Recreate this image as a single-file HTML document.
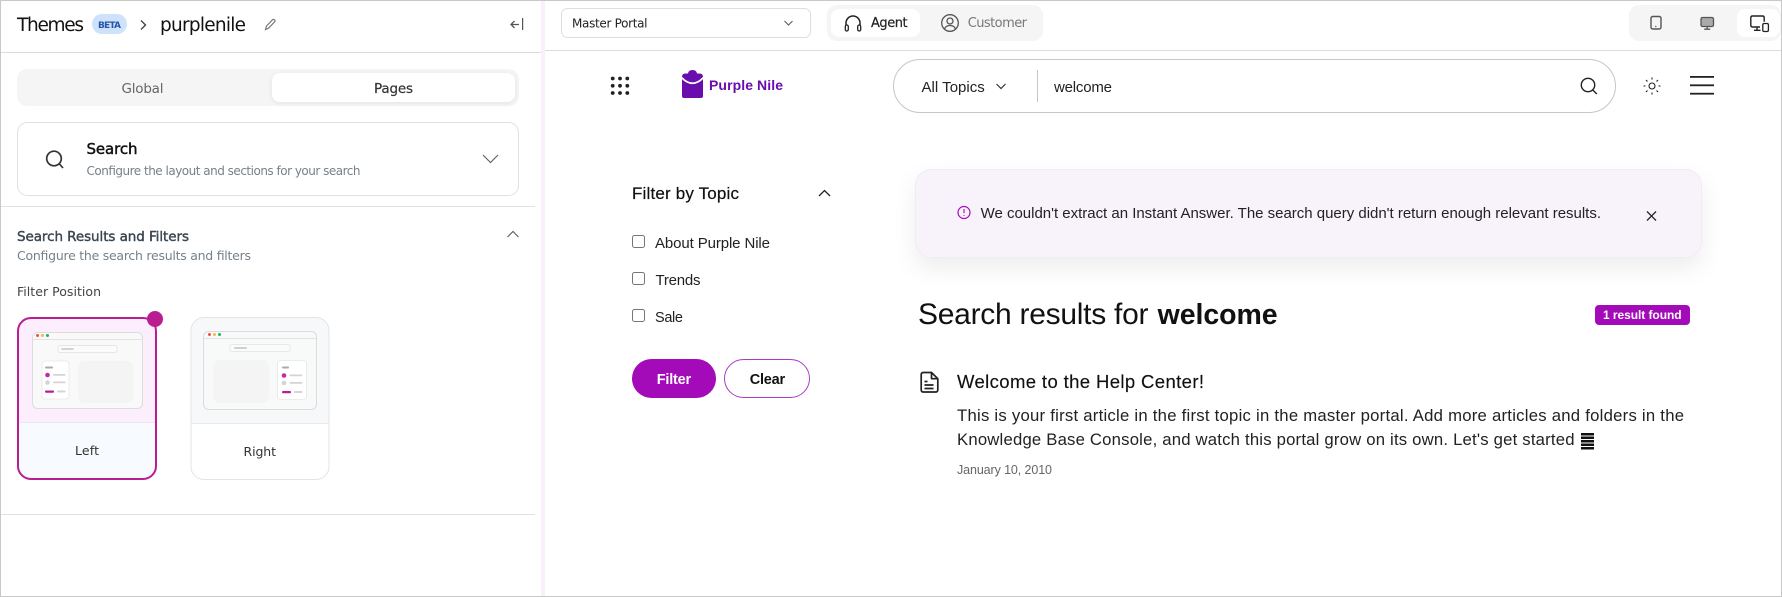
<!DOCTYPE html>
<html lang="en"><head><meta charset="utf-8"><title>Themes</title>
<style>
html,body{margin:0;padding:0;background:#fff;width:1782px;height:597px;overflow:hidden}
svg{display:block}
text{white-space:pre;font-family:"Liberation Sans",sans-serif}
.o text,text.o{font-family:"DejaVu Sans","Liberation Sans",sans-serif}
</style></head><body>
<svg width="1782" height="597" viewBox="0 0 1782 597" xmlns="http://www.w3.org/2000/svg">
<defs>
<filter id="bs" x="-10%" y="-50%" width="120%" height="220%"><feDropShadow dx="0" dy="10" stdDeviation="11" flood-color="#000" flood-opacity=".07"/></filter>
<filter id="ts" x="-5%" y="-30%" width="110%" height="170%"><feDropShadow dx="0" dy="1" stdDeviation="2" flood-color="#000" flood-opacity=".08"/></filter>
</defs>
<rect width="1782" height="597" fill="#fff"/>
<!-- pink separator -->
<rect x="541" y="1" width="4" height="595" fill="#fbeefd"/>
<!-- header lines -->
<rect x="1" y="52" width="540" height="1" fill="#dcdcdc"/>
<rect x="545" y="50" width="1236" height="1" fill="#dcdcdc"/>
<rect x="1" y="206" width="534" height="1" fill="#e2e2e2"/>
<rect x="1" y="514" width="534" height="1" fill="#e2e2e2"/>

<!-- left header -->
<g class="o">
<text x="17" y="31" font-size="18.500" fill="#111" textLength="67">Themes</text>
<rect x="92" y="14" width="35" height="20" rx="10" fill="#cfe2fb"/>
<text x="98" y="28" font-size="9" font-weight="700" fill="#2456a6" textLength="23">BETA</text>
<path d="M141 20.500l4.500 4.500-4.500 4.500" fill="none" stroke="#444" stroke-width="1.400"/>
<text x="160" y="31" font-size="18.500" fill="#111" textLength="86">purplenile</text>
<path d="M265.500 29.500l1-3.500 6-6.200q1-.8 2 .1t.1 2l-6 6.200z" fill="none" stroke="#777" stroke-width="1.200"/>
<path d="M519 24.500h-8m3.500-3.500l-3.500 3.500 3.500 3.500" fill="none" stroke="#555" stroke-width="1.300"/>
<rect x="522" y="18" width="1.200" height="12" fill="#555"/>

<!-- tabs -->
<rect x="17" y="69" width="502" height="37" rx="10" fill="#f5f5f5"/>
<rect x="272" y="73" width="243" height="29" rx="8" fill="#fff" filter="url(#ts)"/>
<text x="121.500" y="93" font-size="13.500" fill="#666" textLength="42">Global</text>
<text x="374" y="93" font-size="13.500" fill="#333" stroke="#333" stroke-width=".2" textLength="39">Pages</text>

<!-- search card -->
<rect x="17.500" y="122.500" width="501" height="73" rx="10" fill="#fff" stroke="#e0e0e0"/>
<circle cx="54" cy="158.500" r="7.300" fill="none" stroke="#333" stroke-width="1.700"/>
<path d="M59.500 164l3.500 4" stroke="#333" stroke-width="1.700" fill="none"/>
<text x="86.500" y="154" font-size="15" fill="#111" stroke="#111" stroke-width=".45" textLength="51">Search</text>
<text x="86.500" y="175" font-size="12" fill="#76818a" textLength="274">Configure the layout and sections for your search</text>
<path d="M483 155l7.500 7.500 7.500-7.500" fill="none" stroke="#666" stroke-width="1.200"/>

<!-- section -->
<text x="17" y="241" font-size="13.500" fill="#3a4550" stroke="#3a4550" stroke-width=".4" textLength="172">Search Results and Filters</text>
<text x="17" y="260" font-size="12.500" fill="#76818a" textLength="234">Configure the search results and filters</text>
<path d="M507.500 237l5.500-5.500 5.500 5.500" fill="none" stroke="#666" stroke-width="1.200"/>
<text x="17" y="296" font-size="12.500" fill="#444" textLength="84">Filter Position</text>
</g>

<!-- Left card -->
<rect x="18" y="318" width="138" height="161" rx="13" fill="#f7fbff"/>
<path d="M18 422V331a13 13 0 0 1 13-13h112a13 13 0 0 1 13 13v91z" fill="#fdeefe"/>
<rect x="18" y="422" width="138" height="1" fill="#ece8ee"/>
<rect x="18" y="318" width="138" height="161" rx="13" fill="none" stroke="#b81e90" stroke-width="2"/>
<circle cx="155" cy="319" r="8" fill="#b81e90"/>
<rect x="32.500" y="332.500" width="110" height="76" rx="5" fill="#f9f9f9" stroke="#ddd"/>
<rect x="33" y="339" width="109" height="1" fill="#e4e4e4"/>
<circle cx="37.500" cy="335.500" r="1.500" fill="#ee5050"/><circle cx="42.500" cy="335.500" r="1.500" fill="#f5bd3a"/><circle cx="47.500" cy="335.500" r="1.500" fill="#22b070"/>
<rect x="58" y="345.500" width="59" height="7" rx="2" fill="#fbfbfb" stroke="#e6e6e6"/>
<rect x="61" y="348" width="13" height="2" rx="1" fill="#d4d4d4"/>
<rect x="42" y="361" width="27" height="38" rx="3" fill="#fff" stroke="#e6e6e6" stroke-width=".8"/>
<rect x="78" y="361" width="55" height="42" rx="6" fill="#f3f4f3"/>
<rect x="45" y="366.500" width="8" height="2" rx="1" fill="#aaa"/>
<circle cx="47.500" cy="375" r="2.300" fill="#c42aa6"/><rect x="53" y="374" width="12.500" height="1.800" rx=".9" fill="#d4d4d4"/>
<circle cx="47.500" cy="382.500" r="2.300" fill="#d4d4d4"/><rect x="53" y="381.500" width="12.500" height="1.800" rx=".9" fill="#d4d4d4"/>
<rect x="45" y="390.500" width="9" height="2.200" rx="1" fill="#b81e90"/><rect x="57" y="390.500" width="8.500" height="2" rx="1" fill="#d4d4d4"/>

<!-- Right card -->
<rect x="191" y="317.500" width="138" height="162" rx="13" fill="#fff"/>
<path d="M191 423V330.500a13 13 0 0 1 13-13h112a13 13 0 0 1 13 13V423z" fill="#f7f8f9"/>
<rect x="191" y="423" width="138" height="1" fill="#e8e8e8"/>
<rect x="191" y="317.500" width="138" height="162" rx="13" fill="none" stroke="#e4e4e4"/>
<rect x="203.500" y="331.500" width="113" height="78" rx="5" fill="#f8f9f9" stroke="#dcdcdc"/>
<rect x="204" y="338" width="112" height="1" fill="#e2e2e2"/>
<circle cx="209.500" cy="334.500" r="1.500" fill="#ee5050"/><circle cx="214.500" cy="334.500" r="1.500" fill="#f5bd3a"/><circle cx="219.500" cy="334.500" r="1.500" fill="#22b070"/>
<rect x="230" y="344.500" width="60" height="7" rx="2" fill="#fbfbfb" stroke="#e8e8e8"/>
<rect x="234" y="347" width="13" height="2" rx="1" fill="#d0d0d0"/>
<rect x="213" y="360" width="56" height="43" rx="7" fill="#f3f4f3"/>
<rect x="277.500" y="360.500" width="29" height="39" rx="3" fill="#fff" stroke="#e6e6e6" stroke-width=".8"/>
<rect x="282" y="366.500" width="7" height="2" rx="1" fill="#aaa"/>
<circle cx="284" cy="375.500" r="2.300" fill="#c42aa6"/><rect x="289.500" y="374.500" width="13" height="1.800" rx=".9" fill="#d4d4d4"/>
<circle cx="284" cy="383" r="2.300" fill="#d4d4d4"/><rect x="289.500" y="382" width="13" height="1.800" rx=".9" fill="#d4d4d4"/>
<rect x="282" y="391" width="9" height="2.200" rx="1" fill="#b81e90"/><rect x="294" y="391" width="8.500" height="2" rx="1" fill="#d4d4d4"/>

<g class="o">
<text x="75" y="455" font-size="12.500" fill="#333" textLength="24">Left</text>
<text x="243.500" y="456" font-size="12.500" fill="#333" textLength="32.500">Right</text>
</g>

<!-- top bar -->
<g class="o">
<rect x="561.500" y="8.500" width="249" height="29" rx="6" fill="#fff" stroke="#dedede"/>
<text x="572" y="27.500" font-size="12" fill="#222" textLength="75.500">Master Portal</text>
<path d="M784.500 21l4 4 4-4" fill="none" stroke="#666" stroke-width="1.200"/>
<rect x="827" y="5" width="216" height="36" rx="10" fill="#f5f5f5"/>
<rect x="831" y="9" width="89" height="28" rx="8" fill="#fff"/>
<path d="M846 29v-6a7 7 0 0 1 14 0v6" fill="none" stroke="#222" stroke-width="1.500"/>
<rect x="845.300" y="25" width="3" height="6" rx="1.500" fill="#fff" stroke="#222" stroke-width="1.300"/>
<rect x="857.700" y="25" width="3" height="6" rx="1.500" fill="#fff" stroke="#222" stroke-width="1.300"/>
<text x="871" y="27" font-size="13" fill="#222" stroke="#222" stroke-width=".2" textLength="36.600">Agent</text>
<circle cx="950" cy="23" r="8.300" fill="none" stroke="#555" stroke-width="1.300"/>
<circle cx="950" cy="21" r="3" fill="none" stroke="#555" stroke-width="1.300"/>
<path d="M944.500 29c1-3 3-3.500 5.500-3.500s4.500.5 5.500 3.500" fill="none" stroke="#555" stroke-width="1.300"/>
<text x="967.700" y="27" font-size="13" fill="#777" textLength="59.300">Customer</text>
<rect x="1629" y="5" width="152" height="36" rx="10" fill="#f5f5f5"/>
<rect x="1737" y="9" width="43" height="28" rx="8" fill="#fff"/>
</g>
<rect x="1651" y="16.500" width="10" height="12.500" rx="1.800" fill="none" stroke="#555" stroke-width="1.400"/>
<circle cx="1655.800" cy="26.500" r=".7" fill="#555"/>
<rect x="1701" y="17.500" width="12.500" height="9" rx="1.500" fill="#aaa" stroke="#555" stroke-width="1.300"/>
<path d="M1707.200 27v2m-3 .2h6" stroke="#555" stroke-width="1.300" fill="none"/>
<path d="M1760 27h-7.500q-1.700 0-1.700-1.700v-7.600q0-1.700 1.700-1.700h10q1.700 0 1.700 1.700v4" fill="none" stroke="#222" stroke-width="1.400"/>
<path d="M1757 27v3m-3 .3h6.500" stroke="#222" stroke-width="1.400" fill="none"/>
<rect x="1762.800" y="23.500" width="5.600" height="8" rx="1.400" fill="none" stroke="#222" stroke-width="1.300"/>

<!-- portal header -->
<g fill="#222">
<circle cx="612.700" cy="78.500" r="1.900"/><circle cx="620" cy="78.500" r="1.900"/><circle cx="627.300" cy="78.500" r="1.900"/>
<circle cx="612.700" cy="85.800" r="1.900"/><circle cx="620" cy="85.800" r="1.900"/><circle cx="627.300" cy="85.800" r="1.900"/>
<circle cx="612.700" cy="93" r="1.900"/><circle cx="620" cy="93" r="1.900"/><circle cx="627.300" cy="93" r="1.900"/>
</g>
<path d="M682 77q0-3.500 3.500-3.500h2.500q.5-3.500 4.500-3.500t4.500 3.500h2.500q3.500 0 3.500 3.500v19q0 2-2 2h-17q-2 0-2-2z" fill="#6a0dad"/>
<path d="M681.500 77.500Q692.500 89 703.500 77.500" fill="none" stroke="#fff" stroke-width="1.700"/>
<text x="709" y="90" font-size="14" font-weight="700" fill="#6a0dad" textLength="74">Purple Nile</text>

<rect x="893.500" y="59.500" width="722" height="53" rx="26.500" fill="#fff" stroke="#c6c6c6"/>
<text x="921.500" y="92" font-size="15" fill="#222" textLength="63.300">All Topics</text>
<path d="M996.500 84l4.500 4.500 4.500-4.500" fill="none" stroke="#333" stroke-width="1.200"/>
<rect x="1037" y="70" width="1" height="32" fill="#c6c6c6"/>
<text x="1054" y="92" font-size="15" fill="#222" textLength="58">welcome</text>
<circle cx="1588" cy="85" r="6.700" fill="none" stroke="#222" stroke-width="1.400"/>
<path d="M1592.800 90l4 4" stroke="#222" stroke-width="1.400" fill="none"/>
<circle cx="1652" cy="86" r="3" fill="none" stroke="#222" stroke-width="1.100"/>
<path d="M1652 77.500v2M1652 92.500v2M1643.500 86h2M1658.500 86h2M1646 80l1.500 1.500M1656.500 90.500l1.500 1.500M1658 80l-1.500 1.500M1647.500 90.500l-1.500 1.500" stroke="#222" stroke-width="1.100" fill="none"/>
<rect x="1690" y="76" width="24" height="1.800" fill="#222"/>
<rect x="1690" y="84.400" width="24" height="1.800" fill="#222"/>
<rect x="1690" y="92.800" width="24" height="1.800" fill="#222"/>

<!-- filter -->
<text x="632" y="199" font-size="17" fill="#111" stroke="#111" stroke-width=".2" textLength="107">Filter by Topic</text>
<path d="M819 196l5.500-5.500 5.500 5.500" fill="none" stroke="#222" stroke-width="1.300"/>
<g fill="#fff" stroke="#767676"><rect x="632.500" y="235.500" width="12" height="12" rx="2"/><rect x="632.500" y="272.500" width="12" height="12" rx="2"/><rect x="632.500" y="309.500" width="12" height="12" rx="2"/></g>
<text x="655" y="248" font-size="15" fill="#222" textLength="115">About Purple Nile</text>
<text x="655.500" y="285" font-size="15" fill="#222" textLength="45">Trends</text>
<text x="655" y="322" font-size="14.500" fill="#222" textLength="28">Sale</text>
<rect x="632" y="359" width="84" height="39" rx="19.500" fill="#a30bb8"/>
<text x="656.700" y="384" font-size="14.500" font-weight="700" fill="#fff" textLength="34.500">Filter</text>
<rect x="724.500" y="359.500" width="85" height="38" rx="19" fill="#fff" stroke="#a93cc2"/>
<text x="749.700" y="384" font-size="14.500" font-weight="700" fill="#111" textLength="35.500">Clear</text>

<!-- banner -->
<rect x="915" y="169" width="787" height="89" rx="16" fill="#f8f2fb" filter="url(#bs)"/>
<rect x="915.500" y="169.500" width="786" height="88" rx="16" fill="none" stroke="#f1ecf3"/>
<circle cx="964" cy="212.500" r="6" fill="none" stroke="#a30bb8" stroke-width="1.200"/>
<path d="M964 209v4.200M964 215v.9" stroke="#a30bb8" stroke-width="1.100" fill="none"/>
<text x="980.600" y="218" font-size="15" fill="#222" textLength="620.400">We couldn't extract an Instant Answer. The search query didn't return enough relevant results.</text>
<path d="M1647 211.500l9 9m0-9l-9 9" stroke="#222" stroke-width="1.300" fill="none"/>

<!-- results -->
<text x="918" y="324" font-size="30" fill="#111" textLength="230.500">Search results for</text>
<text x="1157.600" y="324" font-size="28.500" font-weight="700" fill="#111" textLength="120">welcome</text>
<rect x="1595" y="305" width="95" height="20" rx="4" fill="#a30bb8"/>
<text x="1603" y="319" font-size="12" font-weight="700" fill="#fff" textLength="78.600">1 result found</text>

<path d="M931.500 372.500h-8q-2.300 0-2.300 2.300v14.900q0 2.300 2.300 2.300h12q2.300 0 2.300-2.300v-11zv5.700q0 .5.500.5h5.500M924.500 381.500h3M924.500 385h9M924.500 388.500h9" fill="none" stroke="#222" stroke-width="1.700" stroke-linejoin="round"/>
<text x="957" y="388" font-size="18.500" fill="#111" stroke="#111" stroke-width=".15" textLength="247">Welcome to the Help Center!</text>
<text x="957" y="421" font-size="16.700" fill="#222" textLength="727">This is your first article in the first topic in the master portal. Add more articles and folders in the</text>
<text x="957" y="445" font-size="16.700" fill="#222" textLength="617.500">Knowledge Base Console, and watch this portal grow on its own. Let's get started</text>
<g fill="#111"><rect x="1581" y="433" width="13" height="2.500"/><rect x="1581" y="436.500" width="13" height="2.500"/><rect x="1581" y="440" width="13" height="2.500"/><rect x="1581" y="443.500" width="13" height="2.500"/><rect x="1581" y="447" width="13" height="2.500"/></g>
<text x="957" y="474" font-size="12.500" fill="#666" textLength="95">January 10, 2010</text>

<!-- outer border -->
<rect x=".5" y=".5" width="1781" height="596" fill="none" stroke="#c8c8c8"/>
</svg>
</body></html>
